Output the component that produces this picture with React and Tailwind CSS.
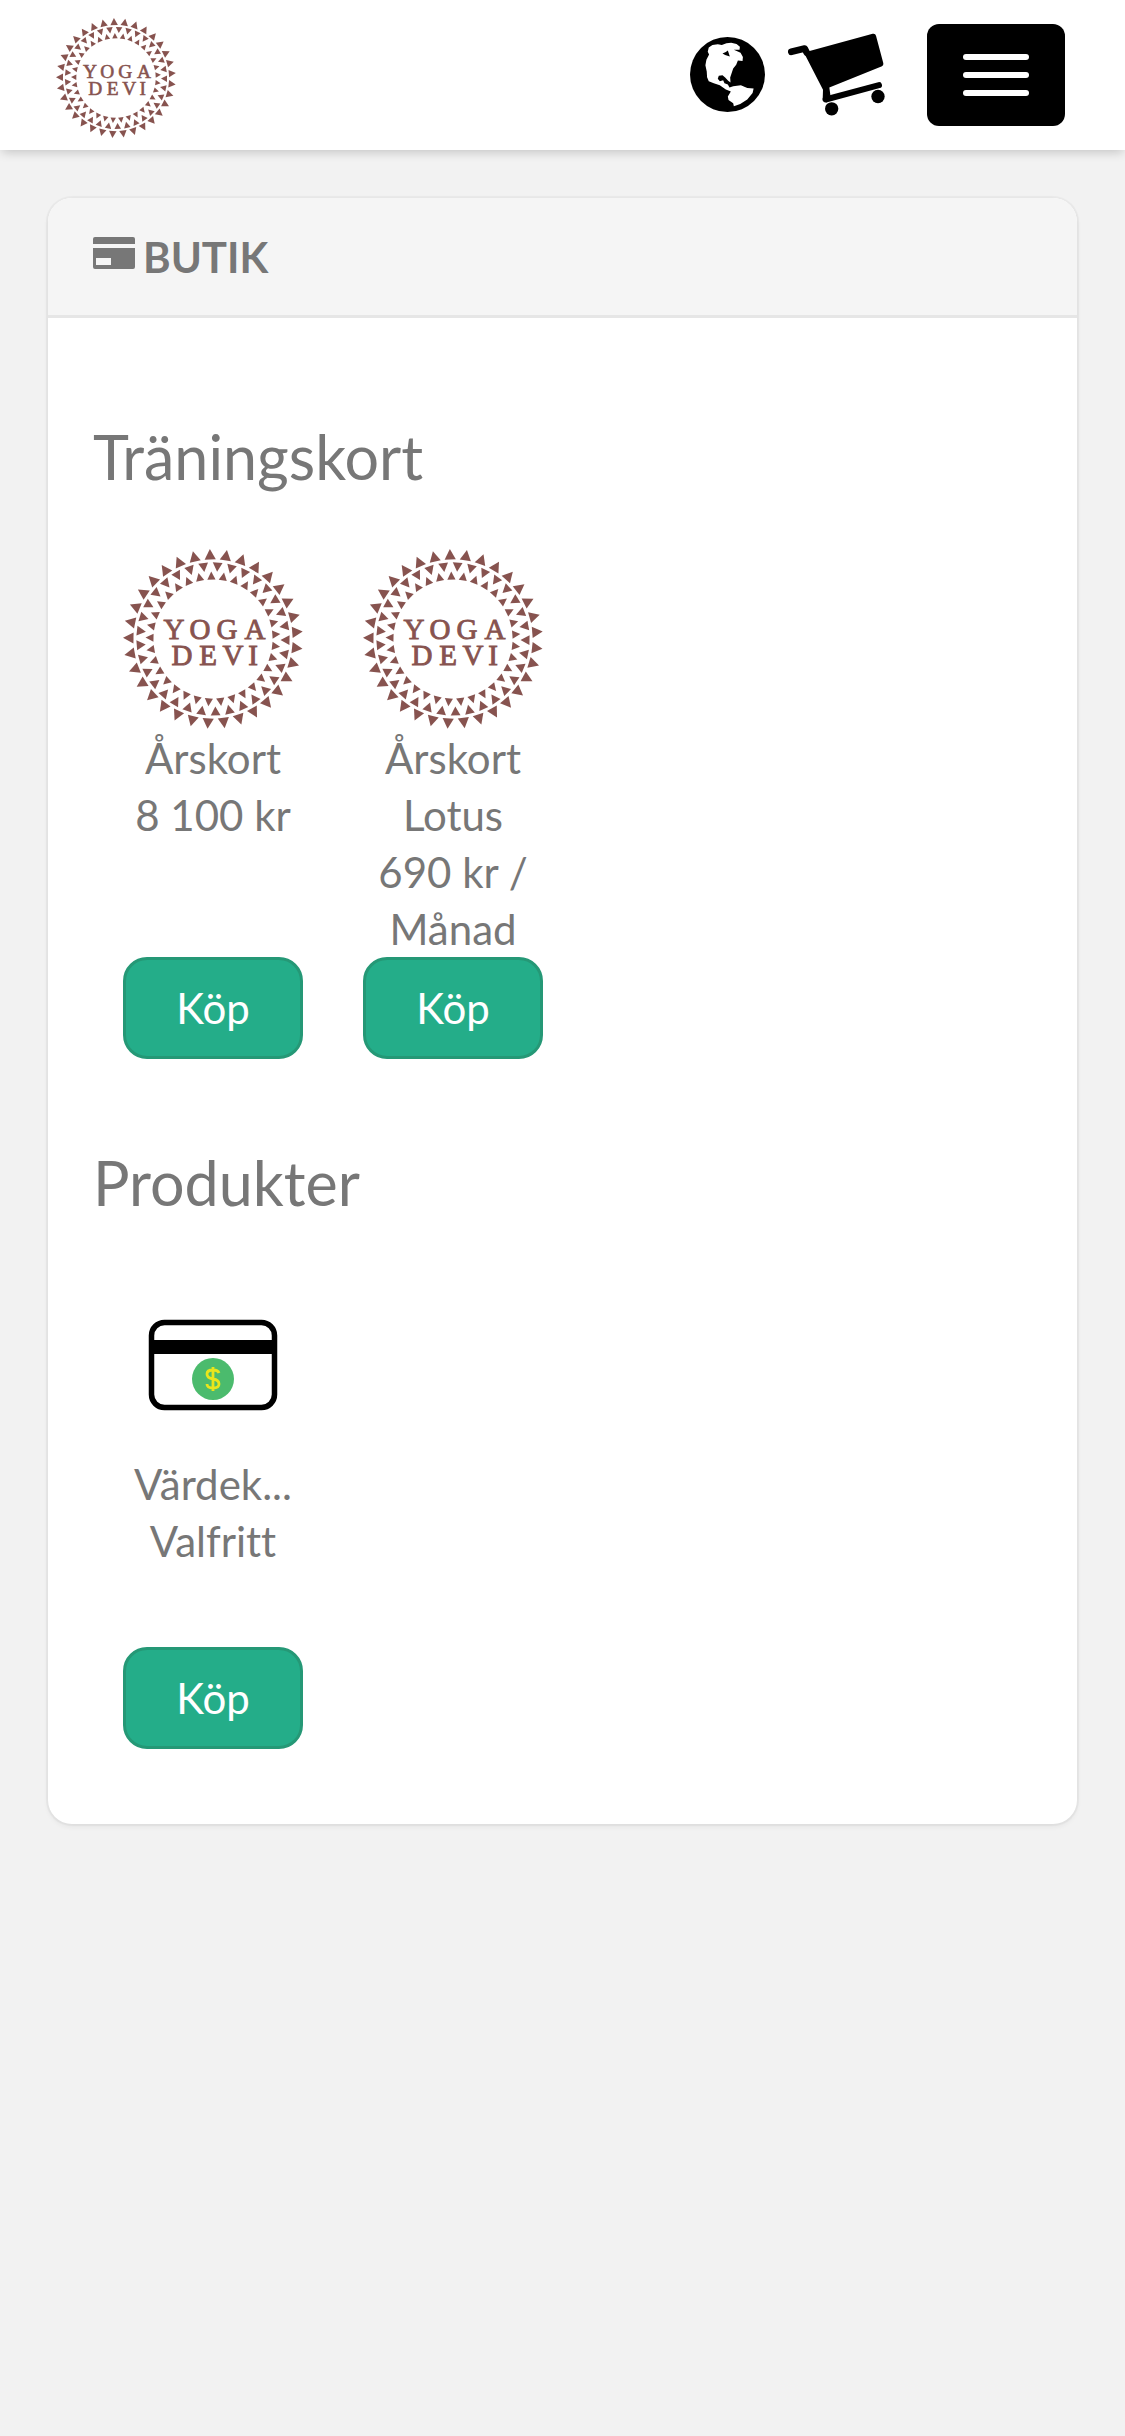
import clsx from 'clsx'

const SEKTIONER = [
  {
    titel: 'Träningskort',
    varor: [
      { id: 1, bild: 'logo', namn: 'Årskort', pris: '8 100 kr' },
      { id: 2, bild: 'logo', namn: 'Årskort Lotus', pris: '690 kr / Månad' },
    ],
  },
  {
    titel: 'Produkter',
    kompakt: true,
    varor: [{ id: 3, bild: 'vardekort', namn: 'Värdek...', pris: 'Valfritt' }],
  },
]

const ANTAL = 33
const RINGAR = [
  { points: '0,-90 5.6,-79.5 -5.6,-79.5', start: -2 },
  { points: '0,-67.5 4.9,-76.5 -4.9,-76.5', start: 3.5 },
  { points: '0,-67.5 4.1,-59.5 -4.1,-59.5', start: -1.5 },
]

function Logo({ className }) {
  return (
    <svg viewBox="0 0 180 180" className={className} fill="#87534f" role="img" aria-label="Yoga Devi">
      <g transform="translate(90 90)">
        {RINGAR.map(r =>
          Array.from({ length: ANTAL }, (_, i) => (
            <polygon
              key={`${r.start}-${i}`}
              points={r.points}
              transform={`rotate(${r.start + (i * 360) / ANTAL})`}
            />
          ))
        )}
      </g>
      <text fontFamily="'Liberation Serif', serif" fontSize="29" stroke="#87534f" strokeWidth="0.9" textAnchor="middle">
        <tspan x="51 77 104 132" y="90">YOGA</tspan>
        <tspan x="59 85 110 130" y="116">DEVI</tspan>
      </text>
    </svg>
  )
}

function Jordglob() {
  return (
    <svg viewBox="61 108 224 224" className="size-[75px]" aria-hidden="true">
      <circle cx="173" cy="220" r="112" />
      <path
        fill="#fff"
        d="M114 152L117 139L128 132L144 130L156 132L170 127L184 125L200 129L210 137L209 146L192 146L212 155L219 168L218 180L204 178L199 191L190 202L185 217L181 229L182 244L175 239L166 229L158 222L147 224L144 233L150 240L160 237L164 246L174 250L179 259L190 255L213 252L232 260L251 262L248 275L232 295L211 308L192 315L190 306L176 296L174 286L183 271L168 265L150 252L132 246L117 240L112 228L111 211L107 192L110 176L118 160Z"
      />
      <path d="M158 157L168 153L174 148L180 166L166 162Z" />
    </svg>
  )
}

function Kundvagn() {
  return (
    <svg viewBox="354 98 291 248" className="h-[83px] w-[97px]" aria-hidden="true">
      <path
        d="M400 153L416 152L608 100Q616 98 618 106L640 188Q641 194 636 197L478 261L481 283L470 306L458 300L459 268Z"
      />
      <path d="M364 154L404 144L410 156" fill="none" stroke="#000" strokeWidth="20" strokeLinecap="round" strokeLinejoin="round" />
      <path d="M467 297L627 254" stroke="#000" strokeWidth="18" strokeLinecap="round" />
      <circle cx="485" cy="325" r="20" />
      <circle cx="624" cy="288" r="20" />
    </svg>
  )
}

function Kortikon() {
  return (
    <svg viewBox="0 0 42 32" className="-mt-2 h-8 w-[42px]" fill="currentColor" aria-hidden="true">
      <path d="M2 0H40Q42 0 42 2V7H0V2Q0 0 2 0Z" />
      <path fillRule="evenodd" d="M0 11H42V30Q42 32 40 32H2Q0 32 0 30ZM3 21V28H18V21Z" />
    </svg>
  )
}

function Vardekort({ className }) {
  return (
    <svg viewBox="0 0 180 180" className={className} role="img" aria-label="Värdekort">
      <rect x="28.5" y="47.5" width="123" height="85" rx="13" fill="#fff" stroke="#000" strokeWidth="5.5" />
      <rect x="28" y="65" width="124" height="14" />
      <circle cx="90" cy="104" r="21" fill="#4bbb6d" />
      <path
        d="M96 98Q95 95 90 95Q84 95 84 99Q84 103 90 104Q96 105 96 109Q96 113 90 113Q84 113 84 109M90 92V116"
        fill="none"
        stroke="#e8e51c"
        strokeWidth="2.8"
      />
    </svg>
  )
}

function Vara({ vara, kompakt }) {
  const Bild = vara.bild === 'logo' ? Logo : Vardekort
  return (
    <li className="flex w-60 flex-col items-center px-[30px]">
      <Bild className="size-[180px]" />
      <div className={clsx('w-full pt-px text-center', kompakt ? 'h-48' : 'h-[228px]')}>
        <p>{vara.namn}</p>
        <p>{vara.pris}</p>
      </div>
      <button
        type="button"
        className="h-[102px] w-full rounded-3xl border-3 border-[#259876] bg-[#24ad89] text-white"
      >
        Köp
      </button>
    </li>
  )
}

export default function App() {
  return (
    <div className="min-h-screen bg-[#f2f2f2] font-['Lato',sans-serif] text-[42px] leading-[57px] text-[#777] [font-variant-ligatures:none]">
      <header className="flex h-[150px] items-center justify-between bg-white pr-[60px] pl-14 shadow-[0_4px_10px_-2px_rgba(0,0,0,0.2)]">
        <a href="#" className="mt-1.5">
          <Logo className="size-[120px]" />
        </a>
        <div className="flex items-center text-black">
          <button type="button" aria-label="Språk" className="-mt-0.5 mr-[23px]">
            <Jordglob />
          </button>
          <a href="#" aria-label="Kundvagn" className="-mt-0.5 mr-[42px]">
            <Kundvagn />
          </a>
          <button
            type="button"
            aria-label="Meny"
            className="flex h-[102px] w-[138px] flex-col items-center justify-center gap-3 rounded-xl bg-black"
          >
            <span className="h-1.5 w-[66px] rounded-full bg-white" />
            <span className="h-1.5 w-[66px] rounded-full bg-white" />
            <span className="h-1.5 w-[66px] rounded-full bg-white" />
          </button>
        </div>
      </header>

      <main className="px-12 pt-12">
        <section className="overflow-hidden rounded-3xl bg-white shadow-[0_0_1px_2px_rgba(0,0,0,0.04),0_3px_4px_1px_rgba(0,0,0,0.04)]">
          <div className="flex h-[120px] items-center gap-2 border-b-3 border-[#e6e6e6] bg-[#f5f5f5] px-[45px]">
            <Kortikon />
            <h1 className="pt-0.5 font-bold">BUTIK</h1>
          </div>

          <div className="flex flex-col gap-[88px] px-[45px] pt-[103px] pb-[75px]">
            {SEKTIONER.map(s => (
              <section key={s.titel}>
                <h2 className="mb-14 text-[61px] leading-[72px]">{s.titel}</h2>
                <ul className="flex flex-wrap">
                  {s.varor.map(v => (
                    <Vara key={v.id} vara={v} kompakt={s.kompakt} />
                  ))}
                </ul>
              </section>
            ))}
          </div>
        </section>
      </main>
    </div>
  )
}
